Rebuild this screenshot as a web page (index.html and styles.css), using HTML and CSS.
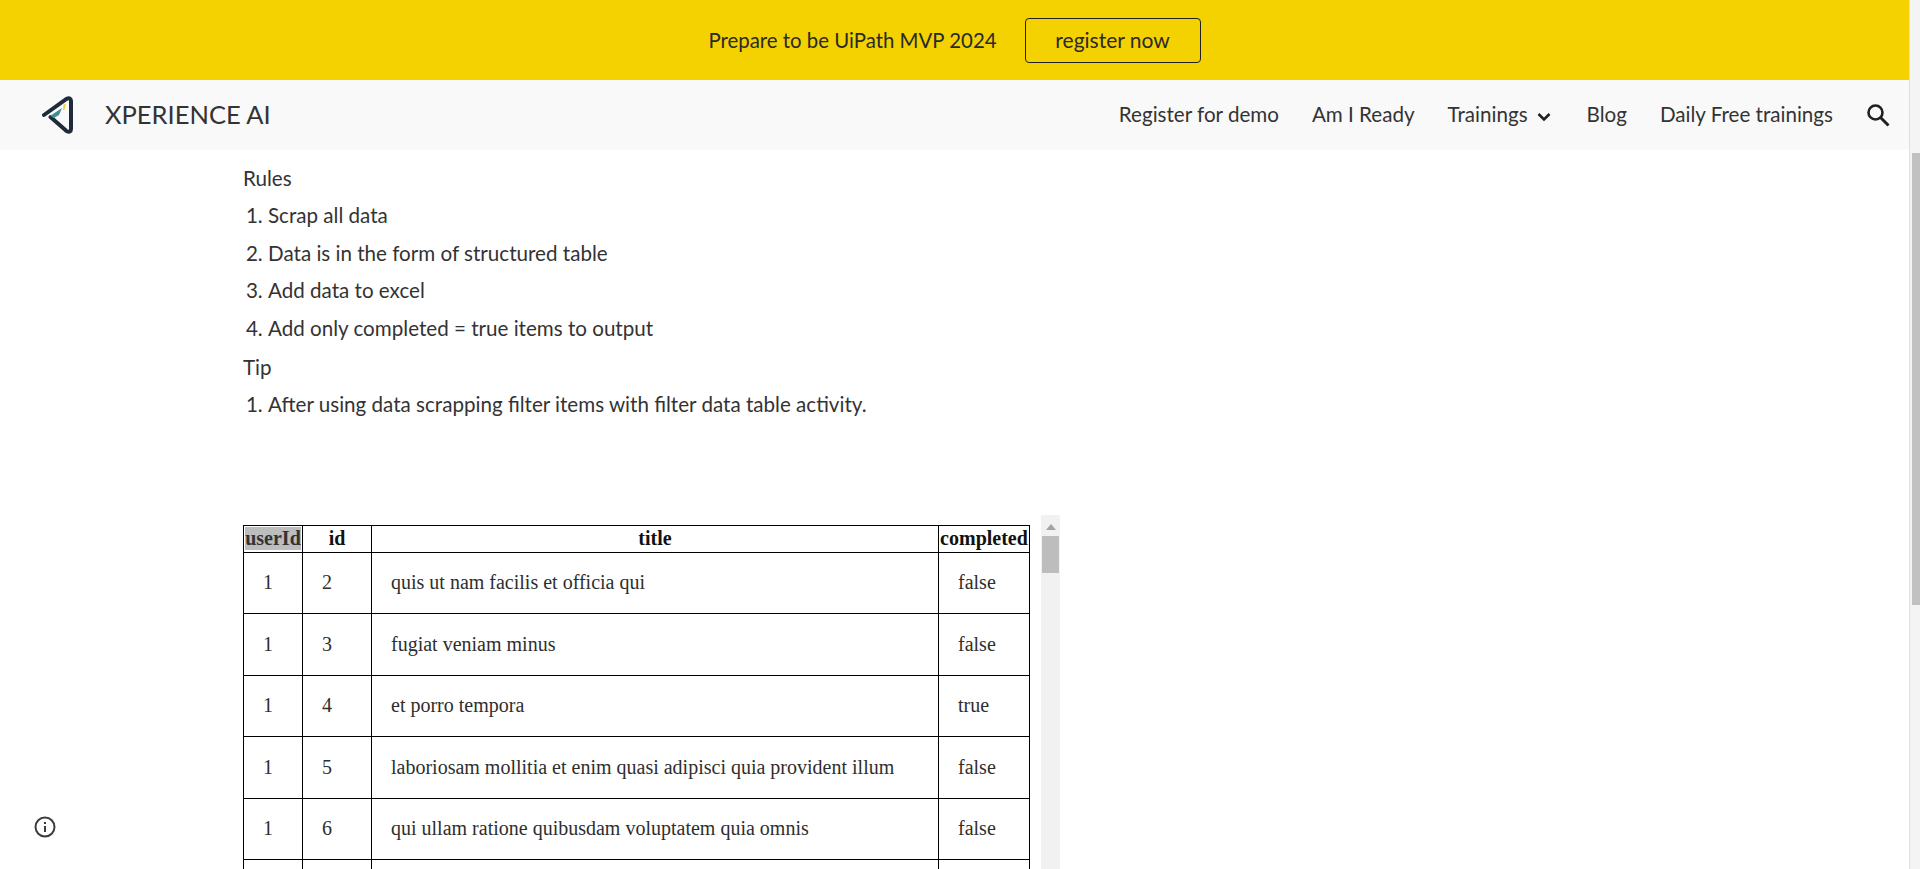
FILE: index.html
```html
<!DOCTYPE html>
<html lang="en">
<head>
<meta charset="utf-8">
<title>XPERIENCE AI</title>
<link rel="stylesheet" href="styles.css">
</head>
<body>
<div class="window">
  <div class="page">
    <div class="banner">
      <span class="banner-text">Prepare to be UiPath MVP 2024</span>
      <a class="banner-btn">register now</a>
    </div>
    <nav class="nav">
      <div class="brand">
        <svg class="logo" viewBox="0 0 34 40" width="34" height="40">
          <path d="M2 19 L24.500 2.800 Q29 1 29 5 L29 33 Q29 37 24.500 35 L8.500 21" fill="none" stroke="#1f2a3a" stroke-width="4" stroke-linecap="round" stroke-linejoin="round"/>
          <path d="M8 20 L20 12 L17 19 L12 22 Z" fill="#3f8f8f"/>
          <path d="M21.500 8.500 L24 7.500 L22.500 14 L21 14 Z" fill="#f2cf4a"/>
        </svg>
        <span class="brand-name">XPERIENCE AI</span>
      </div>
      <div class="nav-links">
        <a class="nav-link">Register for demo</a>
        <a class="nav-link">Am I Ready</a>
        <a class="nav-link nav-drop">Trainings
          <svg class="chev" viewBox="0 0 14 10" width="14" height="10"><path d="M1.500 2 L7 7.500 L12.500 2" fill="none" stroke="#212121" stroke-width="2.600"/></svg>
        </a>
        <a class="nav-link">Blog</a>
        <a class="nav-link">Daily Free trainings</a>
        <svg class="search" viewBox="0 0 24 24" width="24" height="24"><circle cx="9.500" cy="9.500" r="7" fill="none" stroke="#212121" stroke-width="2.600"/><path d="M14.500 14.500 L22.500 22.500" stroke="#212121" stroke-width="3"/></svg>
      </div>
    </nav>
    <main class="content">
      <p class="line">Rules</p>
      <ol class="list">
        <li>Scrap all data</li>
        <li>Data is in the form of structured table</li>
        <li>Add data to excel</li>
        <li>Add only completed = true items to output</li>
      </ol>
      <p class="line line-tip">Tip</p>
      <ol class="list">
        <li>After using data scrapping filter items with filter data table activity.</li>
      </ol>
      <div class="embed">
        <table class="data">
          <colgroup>
            <col class="c-user"><col class="c-id"><col class="c-title"><col class="c-done">
          </colgroup>
          <thead>
            <tr><th><span class="sel">userId</span></th><th>id</th><th>title</th><th>completed</th></tr>
          </thead>
          <tbody>
            <tr><td>1</td><td>2</td><td>quis ut nam facilis et officia qui</td><td>false</td></tr>
            <tr><td>1</td><td>3</td><td>fugiat veniam minus</td><td>false</td></tr>
            <tr><td>1</td><td>4</td><td>et porro tempora</td><td>true</td></tr>
            <tr><td>1</td><td>5</td><td>laboriosam mollitia et enim quasi adipisci quia provident illum</td><td>false</td></tr>
            <tr><td>1</td><td>6</td><td>qui ullam ratione quibusdam voluptatem quia omnis</td><td>false</td></tr>
            <tr><td></td><td></td><td></td><td></td></tr>
          </tbody>
        </table>
        <div class="embed-bar">
          <svg class="embed-up" viewBox="0 0 10 6" width="10" height="6"><path d="M0 6 L5 0 L10 6 Z" fill="#a3a3a3"/></svg>
          <div class="embed-thumb"></div>
        </div>
      </div>
    </main>
    <svg class="info" viewBox="0 0 24 24" width="24" height="24"><circle cx="12" cy="12" r="9.500" fill="none" stroke="#3c3c3c" stroke-width="2"/><rect x="11" y="11" width="2" height="6" fill="#3c3c3c"/><rect x="11" y="7" width="2" height="2" fill="#3c3c3c"/></svg>
  </div>
  <div class="page-bar"><div class="page-thumb"></div></div>
</div>
</body>
</html>
```
FILE: styles.css
```css
* { box-sizing: border-box; }
html, body { margin: 0; padding: 0; height: 869px; overflow: hidden; background: #fff; }
body { font-family: "Lato", "Open Sans", sans-serif; color: #333; }
.window { display: flex; height: 869px; }
.page { position: relative; width: 1909px; height: 869px; overflow: hidden; }
.banner { height: 80px; background: #f4d100; display: flex; align-items: center; justify-content: center; gap: 28px; }
.banner-text { font-size: 20.4px; color: #2a2a2a; }
.banner-btn { width: 176px; height: 45px; padding-bottom: 2px; border: 1px solid #212121; border-radius: 4px; display: flex; align-items: center; justify-content: center; font-size: 21px; color: #2a2a2a; }
.nav { height: 70px; background: #f9f9f9; display: flex; align-items: center; justify-content: space-between; padding: 0 19px 0 42px; }
.brand { display: flex; align-items: center; gap: 29px; }
.logo { display: block; margin-top: 1px; }
.brand-name { font-size: 25.5px; padding-bottom: 2px; }
.nav-links { display: flex; align-items: center; gap: 33px; }
.nav-link { font-size: 20.6px; padding-bottom: 2px; display: flex; align-items: center; gap: 9px; }
.chev { display: block; margin: 5px 3px 0 0; }
.search { display: block; }
.content { padding: 9px 0 0 243px; }
.line { margin: 0; font-size: 20.6px; line-height: 38px; }
.line-tip { margin-top: 1px; }
.list { margin: 0; padding: 0 0 0 25px; font-size: 20.6px; line-height: 37.5px; }
.embed { display: flex; align-items: flex-start; margin-top: 91px; padding-top: 10px; }
.data { border-collapse: collapse; table-layout: fixed; width: 786px; font-family: "Liberation Serif", serif; font-size: 20px; color: #2e2e2e; }
.c-user { width: 59px; }
.c-id { width: 69px; }
.c-title { width: 567px; }
.c-done { width: 91px; }
.data th, .data td { border: 1px solid #000; }
.data th { height: 27px; padding: 0 1px; font-weight: 700; color: #111; text-align: center; white-space: nowrap; }
.data td { height: 61.5px; padding: 0 0 0 19px; text-align: left; }
.sel { display: block; background: #bdbdbd; color: #333; }
.embed-bar { position: relative; width: 19px; height: 360px; margin: -10px 0 0 11px; background: #f1f1f1; }
.embed-up { position: absolute; top: 9px; left: 5px; }
.embed-thumb { position: absolute; top: 21px; left: 1px; width: 17px; height: 37px; background: #bdbdbd; }
.info { position: absolute; left: 33px; bottom: 30px; }
.page-bar { position: relative; width: 11px; height: 869px; background: #f4f4f4; border-left: 1px solid #e0e0e0; }
.page-thumb { position: absolute; top: 153px; right: 0; width: 8px; height: 452px; background: #c1c1c1; }
```
